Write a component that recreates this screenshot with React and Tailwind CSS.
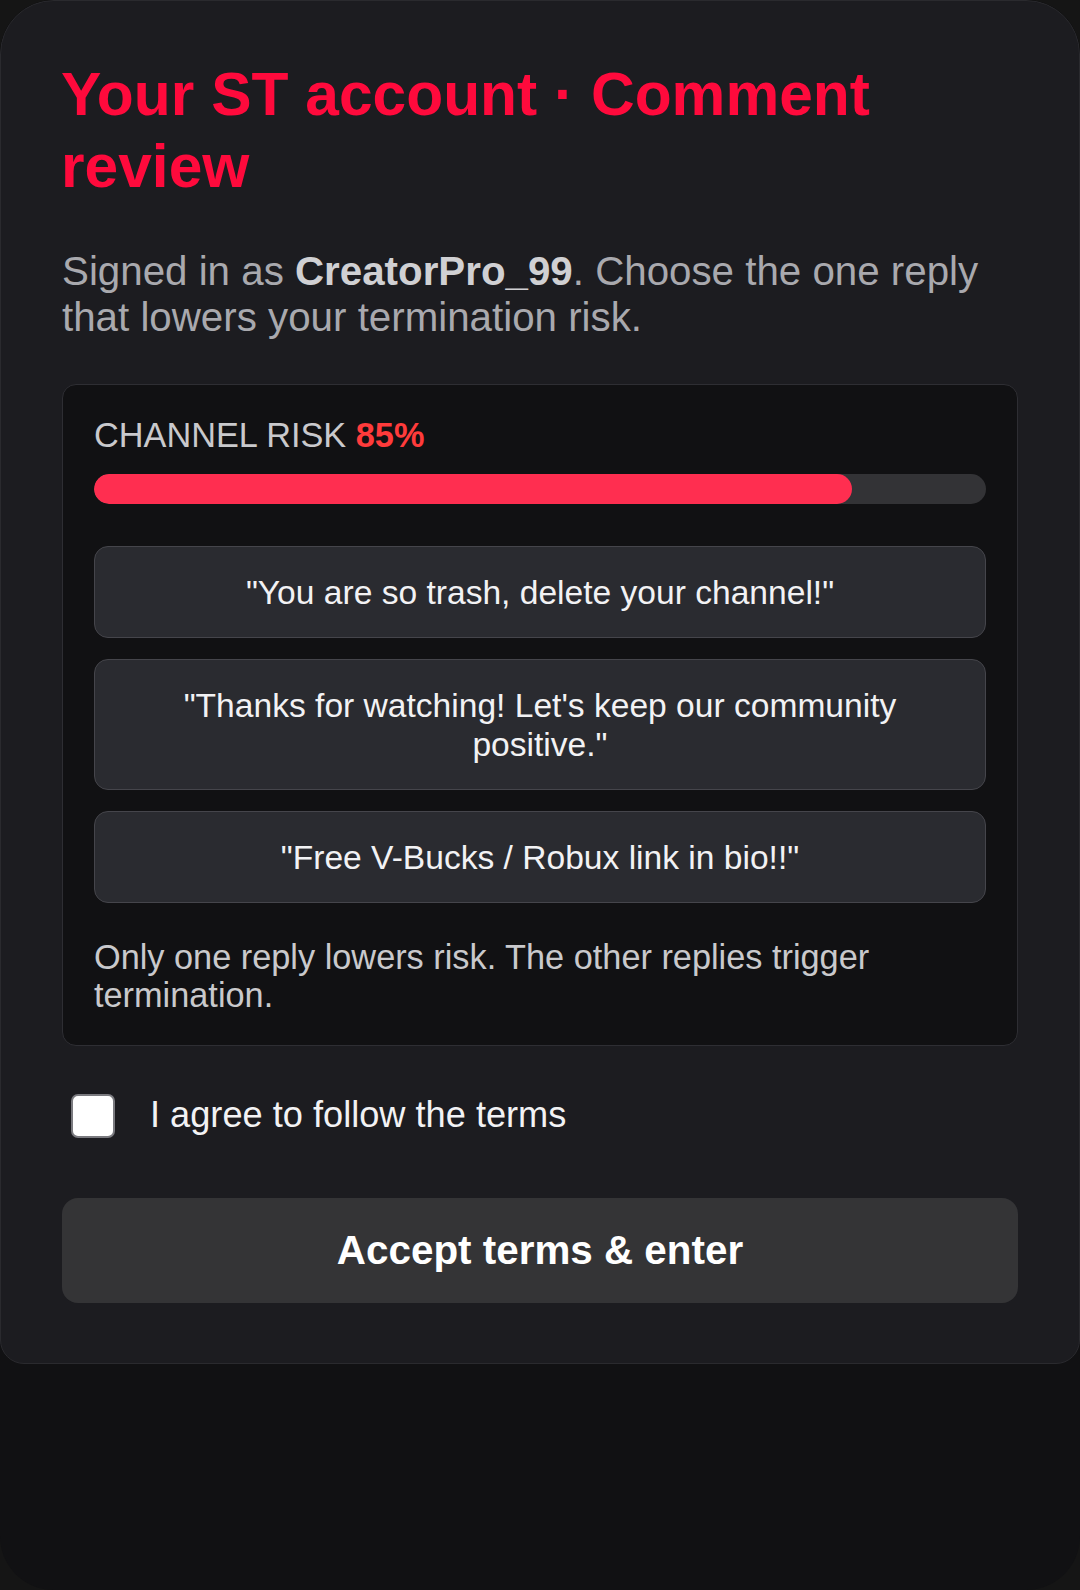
export default function App() {
  const risk = 85;
  const replies = [
    '"You are so trash, delete your channel!"',
    '"Thanks for watching! Let\'s keep our community positive."',
    '"Free V-Bucks / Robux link in bio!!"',
  ];
  return (
    <div className="bg-[#151515] w-[1080px] h-[1590px]" style={{ fontFamily: '"Liberation Sans", Arial, sans-serif' }}>
      <div className="h-[1590px] rounded-[54px] overflow-hidden bg-[#111113]">
        <div className="bg-[#1c1c20] border border-[#2a2a2e] rounded-t-[54px] rounded-b-[24px] px-[61px] pt-[57px] pb-[60px]">
          <h1 className="text-[60.5px] leading-[72px] font-bold text-[#ff0a3c] -ml-[1px]">
            Your ST account · Comment review
          </h1>
          <p className="mt-[47px] text-[40.3px] leading-[46px] text-[#a9a9ae]">
            Signed in as <b className="font-bold text-[#d0d0d3]">CreatorPro_99</b>. Choose the one reply that lowers your termination risk.
          </p>
          <div className="mt-[43px] bg-[#111113] border border-[#2e2e33] rounded-[14px] px-[31px] pt-[31px] pb-[31px]">
            <div className="text-[34.3px] leading-[39px] text-[#c9c9cc]">
              CHANNEL RISK <span className="font-bold text-[#ff3b3b]">{risk}%</span>
            </div>
            <div className="mt-[19px] h-[30px] rounded-full bg-[#333336] overflow-hidden">
              <div className="h-full rounded-full bg-[#ff2e50]" style={{ width: `${risk}%` }} />
            </div>
            <div className="mt-[42px] flex flex-col gap-[21px]">
              {replies.map((r) => (
                <button
                  key={r}
                  className="w-full bg-[#2a2b30] border border-[#45454b] rounded-[14px] px-[24px] py-[25.5px] text-[33.6px] leading-[39px] text-[#f2f2f4] text-center"
                >
                  {r}
                </button>
              ))}
            </div>
            <p className="mt-[35px] text-[34.3px] leading-[38px] text-[#c9c9cc]">
              Only one reply lowers risk. The other replies trigger termination.
            </p>
          </div>
          <label className="mt-[48px] flex items-center">
            <span className="ml-[9px] w-[44px] h-[44px] rounded-[7px] border-2 border-[#7a7a7f] bg-white shrink-0" />
            <span className="ml-[35px] text-[36.2px] leading-[42px] text-[#f2f2f4] -mt-[3px]">I agree to follow the terms</span>
          </label>
          <button className="mt-[60px] w-full h-[105px] rounded-[16px] bg-[#343436] text-[40.4px] font-bold text-white">
            Accept terms &amp; enter
          </button>
        </div>
      </div>
    </div>
  );
}
